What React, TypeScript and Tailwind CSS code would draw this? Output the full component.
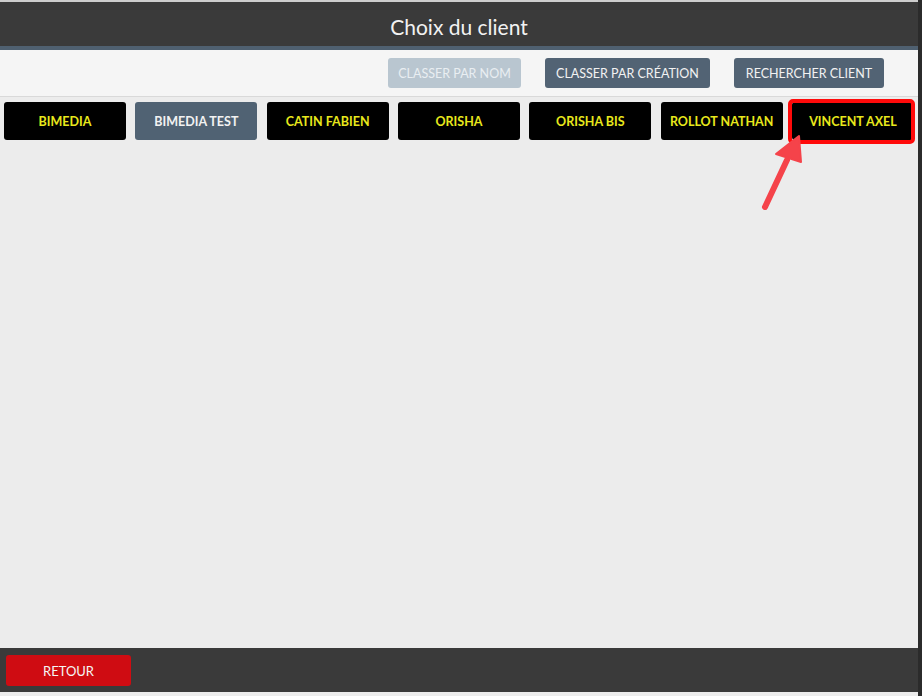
import React from "react";

const clients = [
  { name: "BIMEDIA", active: false },
  { name: "BIMEDIA TEST", active: true },
  { name: "CATIN FABIEN", active: false },
  { name: "ORISHA", active: false },
  { name: "ORISHA BIS", active: false },
  { name: "ROLLOT NATHAN", active: false },
  { name: "VINCENT AXEL", active: false },
];

export default function App() {
  return (
    <div className="flex h-[696px] w-[922px] font-['Lato','Noto_Sans',sans-serif]">
      <div className="flex min-w-0 flex-1 flex-col">
        <div className="h-[2px] bg-[#cdcdcd]" />
        <header className="flex h-[44px] items-center justify-center bg-[#3a3a3a] pt-[5px] text-[21px] text-[#f2f2f2]">
          Choix du client
        </header>
        <div className="h-[4px] bg-[#4f6070]" />
        <div className="flex h-[47px] items-center justify-end gap-6 border-b border-[#d9d9d9] bg-[#f5f5f5] pr-[34px]">
          <button className="h-[30px] w-[133px] rounded-[3px] bg-[#b9c6d0] pt-[2px] text-[12.5px] text-[#e9eef2]">
            CLASSER PAR NOM
          </button>
          <button className="h-[30px] w-[165px] rounded-[3px] bg-[#526374] pt-[2px] text-[12.5px] text-[#f2f2f2]">
            CLASSER PAR CRÉATION
          </button>
          <button className="h-[30px] w-[150px] rounded-[3px] bg-[#526374] pt-[2px] text-[12.5px] text-[#f2f2f2]">
            RECHERCHER CLIENT
          </button>
        </div>
        <main className="relative flex-1 bg-[#ececec]">
          <div className="flex gap-[9.33px] pl-[4px] pt-[5px]">
            {clients.map((c) => (
              <button
                key={c.name}
                className={
                  c.active
                    ? "h-[38px] w-[122px] rounded-[3px] bg-[#506273] pt-[3px] text-[12.5px] font-bold text-[#f2f2f2]"
                    : "h-[38px] w-[122px] rounded-[3px] bg-black pt-[3px] text-[12.5px] font-bold text-[#e8e81c]"
                }
              >
                {c.name}
              </button>
            ))}
          </div>
          <div className="pointer-events-none absolute left-[788px] top-[2px] h-[45px] w-[127px] rounded-[5px] border-[4px] border-[#ff0a0a]" />
          <svg
            className="pointer-events-none absolute left-[740px] top-[33px]"
            width="80"
            height="90"
            viewBox="0 0 80 90"
          >
            <line x1="25" y1="77" x2="47" y2="30" stroke="#f5434a" strokeWidth="6" strokeLinecap="round" />
            <polygon points="59,6 36,24 61,32" fill="#f5434a" stroke="#f5434a" strokeWidth="2" strokeLinejoin="round" />
          </svg>
        </main>
        <footer className="flex h-[44px] items-center bg-[#3a3a3a] px-[6px]">
          <button className="h-[31px] w-[125px] rounded-[3px] bg-[#cf0c12] pt-[4px] text-[13px] text-[#f5f5f5]">
            RETOUR
          </button>
        </footer>
        <div className="h-[4px] bg-[#ececec]" />
      </div>
      <div className="w-[4px] bg-[#2b2b2b]" />
    </div>
  );
}
